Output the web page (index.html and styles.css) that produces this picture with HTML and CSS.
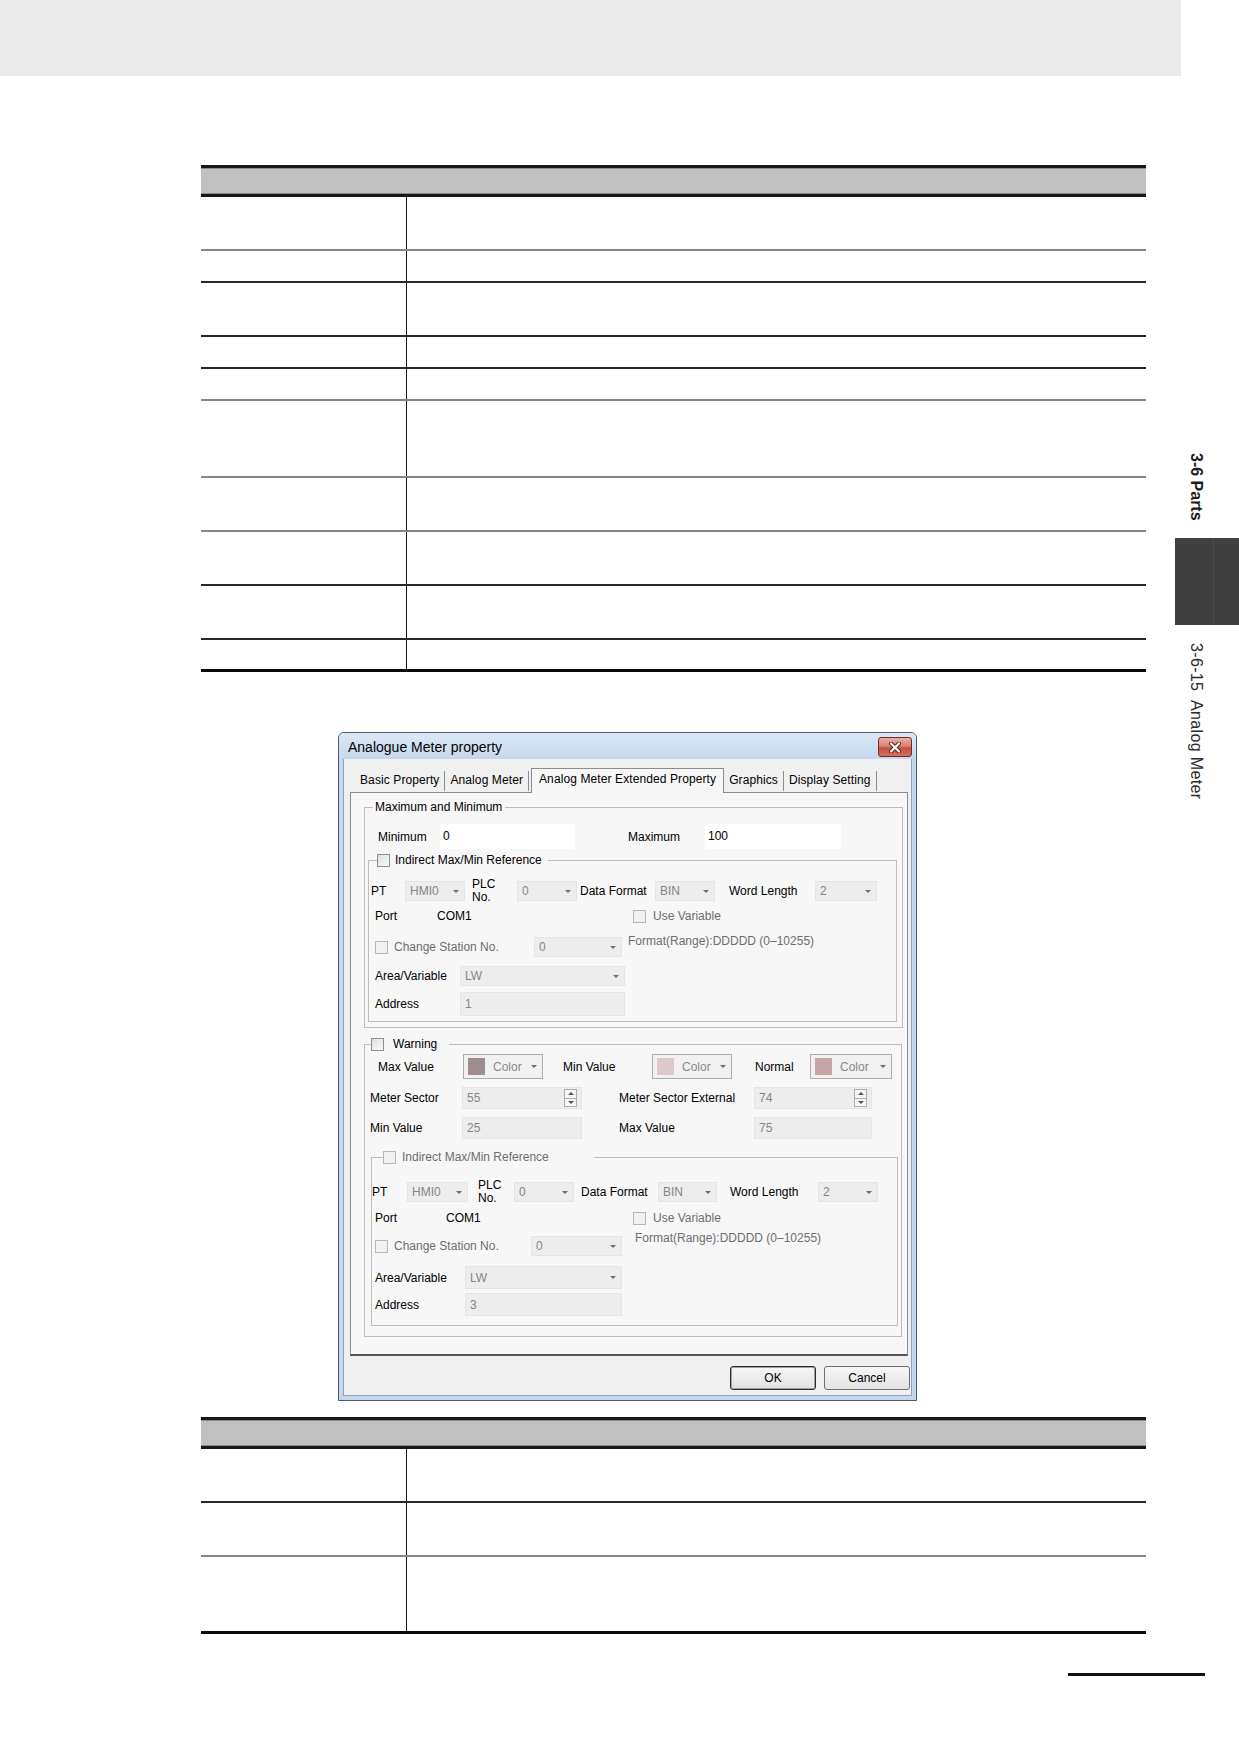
FILE: index.html
```html
<!DOCTYPE html>
<html lang="en">

<head>
  <meta charset="UTF-8" />
  <meta name="viewport" content="width=device-width, initial-scale=1.0" />
  <title>3-6-15 Analog Meter</title>
  <link rel="stylesheet" href="styles.css">
</head>

<body>
  <div class="top-band"></div>

  <div class="page">
    <div class="main">
      <!-- property table -->
      <div class="spec">
        <div class="spec-head"></div>
        <div class="spec-row two soft"><div class="key"></div><div class="val"></div></div>
        <div class="spec-row one"><div class="key"></div><div class="val"></div></div>
        <div class="spec-row two"><div class="key"></div><div class="val"></div></div>
        <div class="spec-row one"><div class="key"></div><div class="val"></div></div>
        <div class="spec-row one soft"><div class="key"></div><div class="val"></div></div>
        <div class="spec-row three soft"><div class="key"></div><div class="val"></div></div>
        <div class="spec-row two soft"><div class="key"></div><div class="val"></div></div>
        <div class="spec-row two"><div class="key"></div><div class="val"></div></div>
        <div class="spec-row two"><div class="key"></div><div class="val"></div></div>
        <div class="spec-row one"><div class="key"></div><div class="val"></div></div>
      </div>

      <!-- property dialog -->
      <div class="dialog">
        <div class="dlg-title">
          <span class="dlg-caption">Analogue Meter property</span>
          <button class="dlg-close">
            <svg width="14" height="11" viewBox="0 0 14 11">
              <path d="M3 1.5l8 8M11 1.5l-8 8" stroke="#5b1d16" stroke-width="4" stroke-linecap="round" />
              <path d="M3 1.5l8 8M11 1.5l-8 8" stroke="#fff" stroke-width="2.2" stroke-linecap="round" />
            </svg>
          </button>
        </div>
        <div class="dlg-client">
          <div class="tabs">
            <span class="tab">Basic Property</span>
            <span class="tab">Analog Meter</span>
            <span class="tab active">Analog Meter Extended Property</span>
            <span class="tab">Graphics</span>
            <span class="tab">Display Setting</span>
          </div>

          <div class="tab-panel">
            <fieldset class="grp grp-range">
              <legend class="lg-range">Maximum and Minimum</legend>
              <div class="row row-minmax">
                <span class="lbl w62">Minimum</span>
                <span class="edit w135">0</span>
                <span class="lbl w77 ml53">Maximum</span>
                <span class="edit w136">100</span>
              </div>

              <fieldset class="grp grp-ref1">
                <legend class="lg-ref1"><span class="chk"></span><span>Indirect Max/Min Reference</span></legend>
                <div class="row row-pt">
                  <span class="lbl w34 ml2">PT</span>
                  <span class="combo w60">HMI0<i class="caret"></i></span>
                  <span class="lbl two-line w45 ml7">PLC<br>No.</span>
                  <span class="combo w60">0<i class="caret"></i></span>
                  <span class="lbl w75 ml3">Data Format</span>
                  <span class="combo w60">BIN<i class="caret"></i></span>
                  <span class="lbl w86 ml14">Word Length</span>
                  <span class="combo w62">2<i class="caret"></i></span>
                </div>
                <div class="row row-port">
                  <span class="lbl w62 ml6">Port</span>
                  <span class="lbl w196">COM1</span>
                  <span class="chk off"></span><span class="lbl dim ml7">Use Variable</span>
                </div>
                <div class="row row-station">
                  <span class="check-lbl w159 ml6"><span class="chk off"></span><span class="dim">Change Station No.</span></span>
                  <span class="combo w88">0<i class="caret"></i></span>
                  <span class="note ml6">Format(Range):DDDDD (0&ndash;10255)</span>
                </div>
                <div class="row row-area">
                  <span class="lbl w85 ml6">Area/Variable</span>
                  <span class="combo w165">LW<i class="caret"></i></span>
                </div>
                <div class="row row-addr">
                  <span class="lbl w85 ml6">Address</span>
                  <span class="field w165">1</span>
                </div>
              </fieldset>
            </fieldset>

            <fieldset class="grp grp-warn">
              <legend class="lg-warn"><span class="chk"></span><span>Warning</span></legend>
              <div class="row row-colors">
                <span class="lbl w85 ml13">Max Value</span>
                <span class="color-pick w80"><i class="swatch sw-max"></i>Color<i class="caret"></i></span>
                <span class="lbl w89 ml20">Min Value</span>
                <span class="color-pick w80"><i class="swatch sw-min"></i>Color<i class="caret"></i></span>
                <span class="lbl w55 ml23">Normal</span>
                <span class="color-pick w82"><i class="swatch sw-normal"></i>Color<i class="caret"></i></span>
              </div>
              <div class="row row-sector">
                <span class="lbl w92 ml5">Meter Sector</span>
                <span class="field w120">55<i class="spin"><b></b><b></b></i></span>
                <span class="lbl w135 ml37">Meter Sector External</span>
                <span class="field w118">74<i class="spin"><b></b><b></b></i></span>
              </div>
              <div class="row row-sector">
                <span class="lbl w92 ml5">Min Value</span>
                <span class="field w120">25</span>
                <span class="lbl w135 ml37">Max Value</span>
                <span class="field w118">75</span>
              </div>

              <fieldset class="grp grp-ref2">
                <legend class="lg-ref2"><span class="chk off"></span><span class="dim">Indirect Max/Min Reference</span></legend>
                <div class="row row-pt2">
                  <span class="lbl w35">PT</span>
                  <span class="combo w61">HMI0<i class="caret"></i></span>
                  <span class="lbl two-line w36 ml10">PLC<br>No.</span>
                  <span class="combo w60">0<i class="caret"></i></span>
                  <span class="lbl w77 ml7">Data Format</span>
                  <span class="combo w59">BIN<i class="caret"></i></span>
                  <span class="lbl w88 ml13">Word Length</span>
                  <span class="combo w60">2<i class="caret"></i></span>
                </div>
                <div class="row row-port2">
                  <span class="lbl w71 ml3">Port</span>
                  <span class="lbl w187">COM1</span>
                  <span class="chk off"></span><span class="lbl dim ml7">Use Variable</span>
                </div>
                <div class="row row-station2">
                  <span class="check-lbl w156 ml3"><span class="chk off"></span><span class="dim">Change Station No.</span></span>
                  <span class="combo w91">0<i class="caret"></i></span>
                  <span class="note note-up ml13">Format(Range):DDDDD (0&ndash;10255)</span>
                </div>
                <div class="row row-area2">
                  <span class="lbl w90 ml3">Area/Variable</span>
                  <span class="combo w157">LW<i class="caret"></i></span>
                </div>
                <div class="row row-addr2">
                  <span class="lbl w90 ml3">Address</span>
                  <span class="field w157">3</span>
                </div>
              </fieldset>
            </fieldset>
          </div>

          <div class="dlg-buttons">
            <button class="btn default">OK</button>
            <button class="btn">Cancel</button>
          </div>
        </div>
      </div>

      <!-- display table -->
      <div class="spec">
        <div class="spec-head"></div>
        <div class="spec-row two"><div class="key"></div><div class="val"></div></div>
        <div class="spec-row two soft"><div class="key"></div><div class="val"></div></div>
        <div class="spec-row three"><div class="key"></div><div class="val"></div></div>
      </div>
    </div>

    <div class="side">
      <div class="side-title">3-6 Parts</div>
      <div class="side-tab"></div>
      <div class="side-sub">3-6-15  Analog Meter</div>
    </div>
  </div>

  <div class="page-rule"></div>
</body>

</html>
```

FILE: styles.css
```css
* {
  padding: 0;
  margin: 0;
  box-sizing: border-box;
}

body {
  width: 1239px;
  background: #fff;
  color: #000;
  font-family: "Liberation Sans", Arial, sans-serif;
}

.top-band {
  width: 1181px;
  height: 76px;
  background: #eaeaea;
}

.page {
  display: flex;
  align-items: flex-start;
}

.main {
  width: 945px;
  margin-left: 201px;
  padding-top: 89px;
}

/* ---------- tables ---------- */

.spec {
  border-top: 3px solid #161616;
}

.spec-head {
  height: 29px;
  background: #c0c0c0;
  border-bottom: 3px solid #161616;
  box-shadow: inset 0 1px 0 #8a8a8a, inset 0 -1px 0 #8a8a8a;
}

.spec-row {
  display: flex;
  border-bottom: 2px solid #262626;
}

.spec-row.soft {
  border-bottom-color: #868686;
}

.spec-row:last-child {
  border-bottom: 3px solid #0a0a0a;
}

.spec-row.one {
  height: 32px;
}

.spec-row.two {
  height: 54px;
}

.spec-row.three {
  height: 77px;
}

.key {
  width: 206px;
  border-right: 1px solid #111;
}

.val {
  flex: 1;
}

/* ---------- dialog ---------- */

.dialog {
  width: 579px;
  margin: 60px 0 16px 137px;
  padding: 0 4px 4px;
  border: 1px solid #4b5b6d;
  border-radius: 6px 6px 0 0;
  background: #c4d7ec;
  font-size: 12px;
}

.dlg-title {
  display: flex;
  justify-content: space-between;
  align-items: flex-start;
  height: 26px;
  margin: 0 -4px;
  padding: 0 4px 0 9px;
  border-radius: 5px 5px 0 0;
  background: linear-gradient(#dde9f6, #c4d7ec);
}

.dlg-caption {
  margin-top: 6px;
  font-size: 14px;
  line-height: 16px;
}

.dlg-close {
  display: flex;
  align-items: center;
  justify-content: center;
  width: 34px;
  height: 20px;
  margin-top: 4px;
  border: 1px solid #6f2c24;
  border-radius: 3px;
  background: linear-gradient(#eab0a6 0%, #d98274 45%, #c4503f 55%, #d0705c 100%);
}

.dlg-client {
  padding: 9px 3px 5px 6px;
  border: 1px solid #8ea3bb;
  border-top: 0;
  background: #f0f0f0;
}

.tabs {
  display: flex;
  align-items: flex-end;
  height: 24px;
  padding-left: 5px;
}

.tab {
  height: 20px;
  margin-bottom: 1px;
  padding: 0 5px;
  line-height: 19px;
  letter-spacing: 0.1px;
  border-right: 1px solid #8d8d8d;
  white-space: nowrap;
}

.tab.active {
  position: relative;
  z-index: 1;
  height: 25px;
  margin: 0 0 -1px 2px;
  padding: 0 7px;
  line-height: 20px;
  border: 1px solid #898c95;
  border-bottom: 0;
  background: #f7f7f7;
}

.tab-panel {
  width: 558px;
  padding: 6px 4px 17px 13px;
  border: 1px solid #898c95;
  border-bottom: 2px solid #555;
  background: #f7f7f7;
}

/* group boxes */
.grp {
  min-width: 0;
  margin: 0;
  padding: 0;
  border: 1px solid #bdbdbd;
}

.grp legend {
  display: flex;
  align-items: center;
  height: 16px;
  line-height: 16px;
  white-space: nowrap;
}

.grp-range {
  width: 539px;
}

.lg-range {
  margin-left: 8px;
  padding: 0 3px 0 2px;
}

.grp-ref1 {
  width: 529px;
  margin: 3px 0 5px 3px;
  padding-bottom: 5px;
}

.lg-ref1 {
  margin-left: 8px;
  padding-right: 6px;
}

.lg-ref1 .chk {
  margin-right: 5px;
}

.grp-warn {
  width: 538px;
  margin-top: 8px;
}

.lg-warn {
  margin-left: 6px;
  padding-right: 12px;
}

.lg-warn .chk {
  margin-right: 9px;
}

.grp-ref2 {
  width: 527px;
  margin: 10px 0 10px 6px;
  padding-bottom: 9px;
}

.lg-ref2 {
  margin-left: 11px;
  padding-right: 45px;
}

.lg-ref2 .chk {
  margin-right: 6px;
}

/* rows */
.row {
  display: flex;
  align-items: center;
}

.row-minmax {
  height: 25px;
  margin-top: 9px;
  padding-left: 13px;
}

.row-pt {
  height: 30px;
  margin-top: 8px;
}

.row-port {
  height: 20px;
}

.row-station {
  height: 24px;
  margin-top: 9px;
}

.row-area {
  height: 20px;
  margin-top: 7px;
}

.row-addr {
  height: 24px;
  margin-top: 6px;
}

.row-colors {
  height: 25px;
  margin-top: 2px;
}

.row-sector {
  height: 22px;
  margin-top: 8px;
}

.row-pt2 {
  height: 30px;
  margin-top: 12px;
}

.row-port2 {
  height: 20px;
  margin-top: 1px;
}

.row-station2 {
  height: 24px;
  margin-top: 6px;
}

.row-area2 {
  height: 23px;
  margin-top: 8px;
}

.row-addr2 {
  height: 23px;
  margin-top: 4px;
}

/* controls */
.lbl {
  flex: none;
  white-space: nowrap;
}

.two-line {
  line-height: 13px;
}

.dim {
  color: #6d6d6d;
}

.check-lbl {
  display: flex;
  align-items: center;
  flex: none;
  white-space: nowrap;
}

.check-lbl .chk {
  margin-right: 6px;
}

.chk {
  flex: none;
  width: 13px;
  height: 13px;
  border: 1px solid #8e8f8f;
  background: linear-gradient(135deg, #dedede, #fbfbfb);
}

.chk.off {
  border-color: #b7b7b7;
  background: #f1f1f1;
}

.edit {
  flex: none;
  height: 25px;
  padding-left: 3px;
  line-height: 25px;
  background: #fff;
}

.combo,
.field {
  display: flex;
  align-items: center;
  flex: none;
  height: 20px;
  padding-left: 4px;
  border: 1px solid #e4e4e4;
  background: #ededed;
  color: #858585;
}

.row-addr .field,
.row-sector .field {
  height: 100%;
}

.row-area2 .combo,
.row-addr2 .field {
  height: 23px;
}

.caret {
  width: 0;
  height: 0;
  margin: 0 5px 0 auto;
  border-left: 3px solid transparent;
  border-right: 3px solid transparent;
  border-top: 3px solid #6f6f6f;
}

.note {
  align-self: flex-start;
  line-height: 12px;
  color: #6d6d6d;
  white-space: nowrap;
}

.note-up {
  margin-top: -2px;
}

.color-pick {
  display: flex;
  align-items: center;
  flex: none;
  height: 25px;
  padding-left: 4px;
  border: 1px solid #acacac;
  background: #f1f1f1;
  color: #8a8a8a;
}

.swatch {
  width: 17px;
  height: 17px;
  margin-right: 8px;
}

.sw-max {
  background: #a08d90;
}

.sw-min {
  background: #dcc9cb;
}

.sw-normal {
  background: #c8a3a6;
}

.spin {
  display: flex;
  flex-direction: column;
  width: 13px;
  height: 18px;
  margin: 0 4px 0 auto;
  border: 1px solid #acacac;
  background: #f6f6f6;
}

.spin b {
  display: flex;
  flex: 1;
  align-items: center;
  justify-content: center;
}

.spin b + b {
  border-top: 1px solid #acacac;
}

.spin b::after {
  content: "";
  border-left: 3px solid transparent;
  border-right: 3px solid transparent;
  border-bottom: 3px solid #555;
}

.spin b + b::after {
  border-bottom: 0;
  border-top: 3px solid #555;
}

.dlg-buttons {
  display: flex;
  justify-content: flex-end;
  gap: 8px;
  margin: 10px -2px 0 0;
}

.btn {
  width: 86px;
  height: 24px;
  border: 1px solid #707070;
  border-radius: 3px;
  background: linear-gradient(#f6f6f6, #e2e2e2);
  font: 12px "Liberation Sans", Arial, sans-serif;
  color: #000;
}

.btn.default {
  border-color: #2c2c2c;
  box-shadow: inset 0 0 0 1px #a0a0a0;
}

/* widths and gaps used by the form rows */
.w34 { width: 34px; }
.w35 { width: 35px; }
.w36 { width: 36px; }
.w45 { width: 45px; }
.w55 { width: 55px; }
.w59 { width: 59px; }
.w60 { width: 60px; }
.w61 { width: 61px; }
.w62 { width: 62px; }
.w71 { width: 71px; }
.w75 { width: 75px; }
.w77 { width: 77px; }
.w80 { width: 80px; }
.w82 { width: 82px; }
.w85 { width: 85px; }
.w86 { width: 86px; }
.w88 { width: 88px; }
.w89 { width: 89px; }
.w90 { width: 90px; }
.w91 { width: 91px; }
.w92 { width: 92px; }
.w118 { width: 118px; }
.w120 { width: 120px; }
.w135 { width: 135px; }
.w136 { width: 136px; }
.w156 { width: 156px; }
.w157 { width: 157px; }
.w159 { width: 159px; }
.w165 { width: 165px; }
.w187 { width: 187px; }
.w196 { width: 196px; }

.ml2 { margin-left: 2px; }
.ml3 { margin-left: 3px; }
.ml5 { margin-left: 5px; }
.ml6 { margin-left: 6px; }
.ml7 { margin-left: 7px; }
.ml10 { margin-left: 10px; }
.ml13 { margin-left: 13px; }
.ml14 { margin-left: 14px; }
.ml20 { margin-left: 20px; }
.ml23 { margin-left: 23px; }
.ml37 { margin-left: 37px; }
.ml53 { margin-left: 53px; }

/* ---------- side index ---------- */

.side {
  width: 64px;
  margin-left: 29px;
  padding-top: 377px;
}

.side-title,
.side-sub {
  writing-mode: vertical-rl;
  width: 43px;
  font-size: 16px;
  line-height: 43px;
  white-space: pre;
}

.side-title {
  height: 85px;
  font-weight: bold;
  color: #1c1c1c;
}

.side-tab {
  height: 87px;
  background: linear-gradient(to right, #404040 38px, #4c4c4c 38px, #4c4c4c 39px, #404040 39px);
}

.side-sub {
  margin-top: 18px;
  letter-spacing: 0.35px;
  color: #2a2a2a;
}

.page-rule {
  width: 137px;
  margin: 39px 0 0 1068px;
  border-top: 3px solid #111;
  box-shadow: 0 1px 0 #aaa;
}
```
